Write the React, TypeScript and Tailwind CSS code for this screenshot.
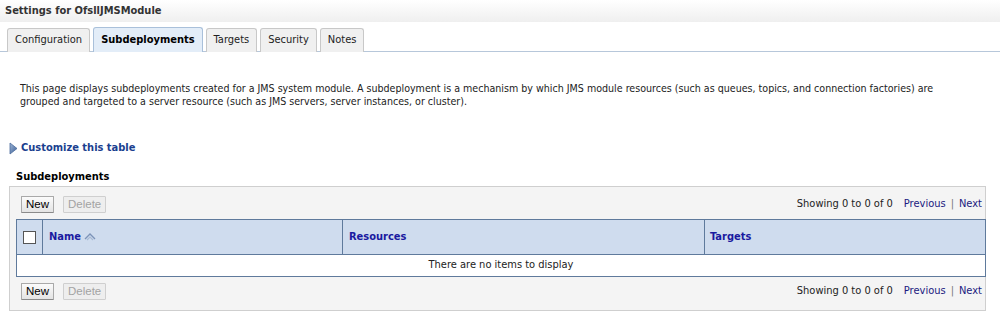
const font = "font-['Tahoma','DejaVu_Sans_Condensed','DejaVu_Sans',sans-serif]";

function Tab({ label, active }: { label: string; active?: boolean }) {
  return (
    <div
      className={
        "h-[24px] px-[7px] flex items-center border border-b-0 rounded-t-[3px] text-[11px] -mb-px " +
        (active
          ? "bg-[#e3edf8] border-[#a9c0da] font-bold text-black h-[25px]"
          : "bg-[#f0f0f0] border-[#c8c8c8] text-[#222]")
      }
    >
      {label}
    </div>
  );
}

function Btn({ label, disabled }: { label: string; disabled?: boolean }) {
  return (
    <button
      className={
        "h-[17px] px-[4px] text-[11.5px] leading-none border rounded-[1px] font-['Liberation_Sans',Arial,sans-serif] " +
        (disabled
          ? "bg-[#eeeeee] border-[#cfcfcf] text-[#a3a3a3]"
          : "bg-gradient-to-b from-[#fbfbfb] to-[#e4e4e4] border-[#a9a9a9] border-b-[#8a8a8a] text-black")
      }
    >
      {label}
    </button>
  );
}

function ControlBar() {
  return (
    <div className="flex items-center justify-between pl-[11px] pr-[3px]">
      <div className="flex gap-[9px]">
        <Btn label="New" />
        <Btn label="Delete" disabled />
      </div>
      <div className="text-[11px] text-[#222] flex items-center">
        <span>Showing 0 to 0 of 0</span>
        <span className="ml-[11px] text-[#1a1a80]">Previous</span>
        <span className="mx-[5px] text-[#777]">|</span>
        <span className="text-[#1a1a80]">Next</span>
      </div>
    </div>
  );
}

export default function App() {
  return (
    <div className={"w-[1000px] h-[328px] bg-white overflow-hidden " + font}>
      <div className="h-[22px] pl-[5px] flex items-center bg-gradient-to-b from-[#ffffff] to-[#efefef] text-[11px] font-bold text-[#333]">
        Settings for OfsllJMSModule
      </div>
      <div className="mt-[4px] pl-[7px] flex items-end gap-[3px] border-b border-[#b7c7da] h-[26px]">
        <Tab label="Configuration" />
        <Tab label="Subdeployments" active />
        <Tab label="Targets" />
        <Tab label="Security" />
        <Tab label="Notes" />
      </div>

      <p className="mt-[30px] ml-[20px] w-[932px] text-[10.6px] leading-[13px] text-[#222]">
        This page displays subdeployments created for a JMS system module. A subdeployment is a mechanism by which JMS module resources (such as queues, topics, and connection factories) are grouped and targeted to a server resource (such as JMS servers, server instances, or cluster).
      </p>

      <div className="mt-[32px] ml-[9px] flex items-center gap-[3px]">
        <svg width="9" height="13" viewBox="0 0 9 13">
          <defs>
            <linearGradient id="tri" x1="0" x2="1" y1="0" y2="1">
              <stop offset="0" stopColor="#9fb6d6" />
              <stop offset="1" stopColor="#3a5f96" />
            </linearGradient>
          </defs>
          <path d="M1 1 L8 6.5 L1 12 Z" fill="url(#tri)" stroke="#4a6b9c" strokeWidth="0.8" />
        </svg>
        <span className="text-[11px] font-bold text-[#1b3f8f]">Customize this table</span>
      </div>

      <div className="mt-[12px] ml-[16px] text-[11px] font-bold text-black">Subdeployments</div>

      <div className="mt-[1px] ml-[9px] w-[977px] h-[125px] bg-[#f4f4f4] border border-[#cfcfcf] pt-[9px]">
        <ControlBar />
        <table className="mt-[6px] ml-[6px] w-[970px] border-collapse border border-[#5f7a9c] text-[11px]">
          <thead>
            <tr className="h-[35px] bg-[#cfdcee] text-left">
              <th className="w-[25px] border-r border-[#5f7a9c] px-[6px]">
                <div className="w-[13px] h-[13px] bg-white border border-[#555]" />
              </th>
              <th className="w-[300px] border-r border-[#5f7a9c] pl-[6px] font-bold text-[#1a1aa0]">
                <span className="flex items-center gap-[3px]">
                  Name
                  <svg width="12" height="10" viewBox="0 0 12 10">
                    <path d="M1 7 L6 2 L11 7" fill="none" stroke="#7c93b8" strokeWidth="1.4" />
                    <path d="M3 8 L6 5 L9 8" fill="none" stroke="#a8bad4" strokeWidth="1.2" />
                  </svg>
                </span>
              </th>
              <th className="w-[362px] border-r border-[#5f7a9c] pl-[6px] font-bold text-[#1a1aa0]">Resources</th>
              <th className="pl-[5px] font-bold text-[#1a1aa0]">Targets</th>
            </tr>
          </thead>
          <tbody>
            <tr className="h-[22px] bg-white border-t border-[#5f7a9c]">
              <td colSpan={4} className="text-center text-[11px] text-[#222]">There are no items to display</td>
            </tr>
          </tbody>
        </table>
        <div className="mt-[6px]">
          <ControlBar />
        </div>
      </div>
    </div>
  );
}
